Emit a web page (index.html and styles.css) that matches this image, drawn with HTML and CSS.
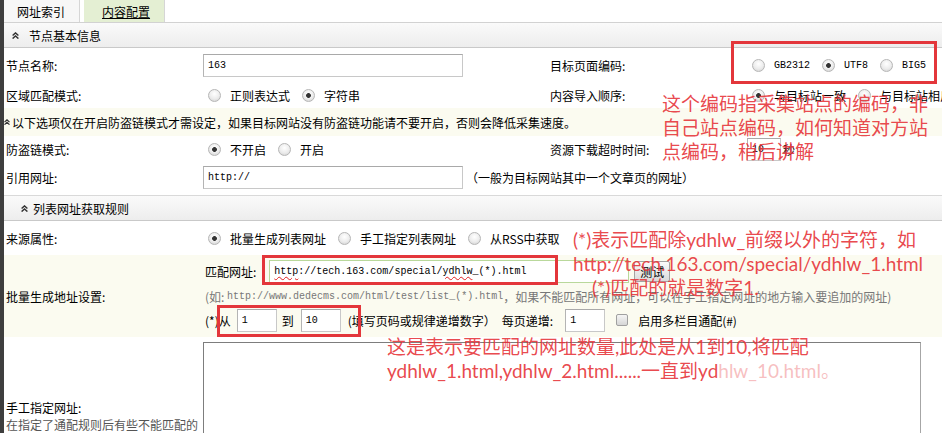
FILE: index.html
```html
<html>
<head>
    <link rel="stylesheet" href="styles.css">
</head>
<body>
    <div class="frame">
        <div class="strip"></div>
        <div class="main">
            <div class="tabs">
                <span class="tab">网址索引</span>
                <span class="tab tab-on">内容配置</span>
            </div>

            <div class="sec-head sec-first">
                <svg class="fold" width="7" height="7" viewBox="0 0 7 7"><path d="M0.6 3.6 L3.5 0.9 L6.4 3.6 M0.6 6.6 L3.5 3.9 L6.4 6.6" fill="none" stroke="#333" stroke-width="1.4"/></svg>
                节点基本信息
            </div>

            <div class="row row-4 row-name">
                <div class="lbl">节点名称:</div>
                <div class="val"><input class="txt txt-wide" value="163"></div>
                <div class="lbl lbl-2">目标页面编码:</div>
                <div class="val">
                    <input type="radio" class="rd" name="enc"><span class="opt mono">GB2312</span>
                    <input type="radio" class="rd" name="enc" checked><span class="opt mono">UTF8</span>
                    <input type="radio" class="rd" name="enc"><span class="opt mono">BIG5</span>
                </div>
            </div>

            <div class="row row-4 row-area">
                <div class="lbl">区域匹配模式:</div>
                <div class="val">
                    <input type="radio" class="rd" name="area"><span class="opt">正则表达式</span>
                    <input type="radio" class="rd" name="area" checked><span class="opt">字符串</span>
                </div>
                <div class="lbl lbl-2">内容导入顺序:</div>
                <div class="val">
                    <input type="radio" class="rd" name="order" checked><span class="opt">与目标站一致</span>
                    <input type="radio" class="rd" name="order"><span class="opt">与目标站相反</span>
                </div>
            </div>

            <div class="notice">
                <svg class="fold fold-sm" width="6" height="6" viewBox="0 0 7 7"><path d="M0.6 3.6 L3.5 0.9 L6.4 3.6 M0.6 6.6 L3.5 3.9 L6.4 6.6" fill="none" stroke="#333" stroke-width="1.4"/></svg>
                以下选项仅在开启防盗链模式才需设定，如果目标网站没有防盗链功能请不要开启，否则会降低采集速度。
            </div>

            <div class="row row-4 row-leech">
                <div class="lbl">防盗链模式:</div>
                <div class="val">
                    <input type="radio" class="rd" name="leech" checked><span class="opt">不开启</span>
                    <input type="radio" class="rd" name="leech"><span class="opt">开启</span>
                </div>
                <div class="lbl lbl-2">资源下载超时时间:</div>
                <div class="val"><input class="txt txt-sec" value="10"><span class="unit">秒</span></div>
            </div>

            <div class="row row-2 row-ref">
                <div class="lbl">引用网址:</div>
                <div class="val"><input class="txt txt-wide" value="http://"><span class="tip">（一般为目标网站其中一个文章页的网址）</span></div>
            </div>

            <div class="sec-head sec-second">
                <svg class="fold" width="7" height="7" viewBox="0 0 7 7"><path d="M0.6 3.6 L3.5 0.9 L6.4 3.6 M0.6 6.6 L3.5 3.9 L6.4 6.6" fill="none" stroke="#333" stroke-width="1.4"/></svg>
                列表网址获取规则
            </div>

            <div class="row row-2 row-source">
                <div class="lbl">来源属性:</div>
                <div class="val">
                    <input type="radio" class="rd" name="src" checked><span class="opt">批量生成列表网址</span>
                    <input type="radio" class="rd" name="src"><span class="opt">手工指定列表网址</span>
                    <input type="radio" class="rd" name="src"><span class="opt">从RSS中获取</span>
                </div>
            </div>

            <div class="row row-2 row-batch">
                <div class="lbl">批量生成地址设置:</div>
                <div class="val batch">
                    <div class="line line-url">
                        <span>匹配网址:</span>
                        <div class="txt txt-url"><span class="typo">http</span>://tech.163.com/special/<span class="typo">ydhlw</span>_(*).html</div>
                        <button class="btn">测试</button>
                    </div>
                    <div class="line line-hint">(如:&nbsp;<span class="mono">http://www.dedecms.com/html/test/list_(*).html</span>，如果不能匹配所有网址，可以在手工指定网址的地方输入要追加的网址)</div>
                    <div class="line line-range">
                        <span>(*)从</span>
                        <input class="txt txt-num" value="1">
                        <span class="to">到</span>
                        <input class="txt txt-num" value="10">
                        <span class="fill">(填写页码或规律递增数字）</span>
                        <span class="step">每页递增:</span>
                        <input class="txt txt-num txt-step" value="1">
                        <input type="checkbox" class="ck">
                        <span class="multi">启用多栏目通配(#)</span>
                    </div>
                </div>
            </div>

            <div class="row row-2 row-manual">
                <div class="lbl lbl-manual">手工指定网址:<br><span class="sub">在指定了通配规则后有些不能匹配的</span></div>
                <div class="val"><textarea class="manual"></textarea></div>
            </div>
        </div>

        <div class="mark mark-enc"></div>
        <div class="mark mark-url"></div>
        <div class="mark mark-range"></div>

        <div class="note note-enc">这个编码指采集站点的编码，非<br>自己站点编码，如何知道对方站<br>点编码，稍后讲解</div>
        <div class="note note-url">(*)表示匹配除ydhlw_前缀以外的字符，如<br>http://tech.163.com/special/ydhlw_1.html<br><span class="indent">(*)匹配的就是数字1.</span></div>
        <div class="note note-range">这是表示要匹配的网址数量,此处是从1到10,将匹配<br>ydhlw_1.html,ydhlw_2.html......一直到yd<span class="fade">hlw_10.html。</span></div>
    </div>
</body>
</html>
```

FILE: styles.css
```css
* {
    box-sizing: border-box;
}

html, body {
    margin: 0;
    height: 100%;
    overflow: hidden;
}

body {
    font-family: "Noto Sans CJK SC", sans-serif;
    font-size: 12px;
    color: #000;
    background-color: #fff;
}

.frame {
    position: relative;
    display: flex;
    min-height: 100vh;
}

.strip {
    flex: none;
    width: 4px;
    background-color: #3e3e3e;
}

.main {
    flex: 1;
    min-width: 0;
}

.mono {
    font-family: "Liberation Mono", monospace;
    font-size: 10px;
}

/* tabs */
.tabs {
    display: flex;
    height: 23px;
    border-bottom: 1px solid #d2d2d2;
}

.tab {
    display: flex;
    align-items: center;
    padding: 0 14px 0 13px;
    margin-right: 4px;
    background-color: #f7f7f7;
    border-right: 1px solid #d6d6d6;
}

.tab-on {
    padding: 0 14px 0 18px;
    background-color: #e4efd3;
    text-decoration: underline;
}

/* section headers */
.sec-head {
    display: flex;
    align-items: center;
    height: 25px;
    border-bottom: 1px solid #c9c9c9;
    background: linear-gradient(#fafafa, #ededed);
}

.sec-first {
    padding-left: 8px;
}

.sec-first .fold {
    margin-right: 10px;
}

.sec-second {
    height: 26px;
    padding-left: 17px;
    border-top: 1px solid #d9d9d9;
}

.sec-second .fold {
    margin-right: 5px;
}

.fold {
    flex: none;
}

/* rows */
.row {
    display: grid;
    align-items: center;
    white-space: nowrap;
}

.row-4 {
    grid-template-columns: 199px 347px 197px 1fr;
}

.row-2 {
    grid-template-columns: 199px 1fr;
}

.row-name {
    height: 34px;
}

.row-area {
    height: 26px;
}

.row-leech {
    height: 26px;
}

.row-ref {
    height: 33px;
    padding-bottom: 3px;
}

.row-source {
    height: 34px;
}

.row-batch {
    height: 82px;
    background-color: #fbfbf0;
}

.row-manual {
    align-items: start;
}

.lbl {
    padding-left: 2px;
}

.lbl-2 {
    padding-left: 0;
}

.val {
    display: flex;
    align-items: center;
    overflow: hidden;
}

.notice {
    display: flex;
    align-items: center;
    height: 28px;
    background-color: #fbfbf0;
    white-space: nowrap;
}

.notice .fold {
    margin-right: 2px;
}

/* controls */
.rd {
    appearance: none;
    flex: none;
    width: 13px;
    height: 13px;
    margin: 0 9px 0 5px;
    border-radius: 50%;
    border: 1px solid #b6b6b6;
    background: radial-gradient(circle at 50% 35%, #fff 0%, #ececec 55%, #cdcdcd 100%);
}

.rd:checked {
    background: radial-gradient(circle, #333 0 2px, rgba(0, 0, 0, 0) 2.8px),
                radial-gradient(circle at 50% 35%, #fff 0%, #ececec 55%, #cdcdcd 100%);
}

.opt {
    margin-right: 7px;
}

.txt {
    height: 23px;
    margin: 0;
    padding: 0 4px;
    border: 1px solid #c8c8c8;
    border-top-color: #a9a9a9;
    border-left-color: #b4b4b4;
    background-color: #fff;
    font-family: "Liberation Mono", monospace;
    font-size: 10px;
    color: #000;
    outline: none;
}

.txt-wide {
    width: 260px;
}

.txt-sec {
    width: 34px;
}

.unit {
    margin-left: 2px;
}

.tip {
    margin-left: 3px;
}

/* batch settings */
.batch {
    flex-direction: column;
    align-items: flex-start;
    padding: 4px 0 0 2px;
    height: 100%;
}

.line {
    display: flex;
    align-items: center;
}

.line-url {
    height: 24px;
}

.txt-url {
    display: flex;
    align-items: center;
    width: 360px;
    margin-left: 13px;
    border-color: #b9d89b;
}

.typo {
    text-decoration: underline wavy #e02020;
    text-decoration-thickness: 1px;
    text-underline-offset: 2px;
}

.btn {
    width: 36px;
    height: 21px;
    margin-left: 5px;
    padding: 0;
    border: 1px solid #a3a3a3;
    border-radius: 2px;
    background: linear-gradient(#fbfbfb, #dadada);
    font-family: "Noto Sans CJK SC", sans-serif;
    font-size: 12px;
    color: #000;
}

.line-hint {
    height: 18px;
    margin-top: 4px;
    color: #777;
}

.line-range {
    height: 24px;
    margin-top: 3px;
}

.txt-num {
    width: 40px;
    margin-left: 6px;
}

.to {
    margin-left: 5px;
}

.to + .txt-num {
    margin-left: 7px;
}

.fill {
    margin-left: 7px;
}

.step {
    margin-left: 6px;
}

.txt-step {
    margin-left: 12px;
}

.ck {
    appearance: none;
    width: 12px;
    height: 12px;
    margin: 0 0 0 11px;
    border: 1px solid #a0a0a0;
    border-radius: 2px;
    background: linear-gradient(#f5f5f5, #d6d6d6);
}

.multi {
    margin-left: 10px;
}

/* manual urls */
.lbl-manual {
    padding-top: 62px;
    line-height: 17px;
}

.sub {
    color: #555;
}

.manual {
    display: block;
    width: 718px;
    height: 200px;
    margin-top: 5px;
    border: 1px solid #a6a6a6;
    border-top-color: #7d7d7d;
    border-left-color: #7d7d7d;
    resize: none;
}

/* annotations drawn over the form */
.mark {
    position: absolute;
    border: 3px solid #e3363b;
}

.mark-enc {
    left: 731px;
    top: 41px;
    width: 206px;
    height: 43px;
}

.mark-url {
    left: 262px;
    top: 255px;
    width: 296px;
    height: 30px;
}

.mark-range {
    left: 217px;
    top: 305px;
    width: 144px;
    height: 32px;
}

.note {
    position: absolute;
    font-family: Lato, "Noto Sans CJK SC", sans-serif;
    font-size: 19px;
    line-height: 24px;
    color: rgba(230, 50, 55, 0.9);
    white-space: nowrap;
}

.note-enc {
    left: 662px;
    top: 92px;
}

.note-url {
    left: 573px;
    top: 228px;
}

.indent {
    padding-left: 19px;
}

.note-range {
    left: 387px;
    top: 335px;
}

.fade {
    opacity: 0.35;
}
```
